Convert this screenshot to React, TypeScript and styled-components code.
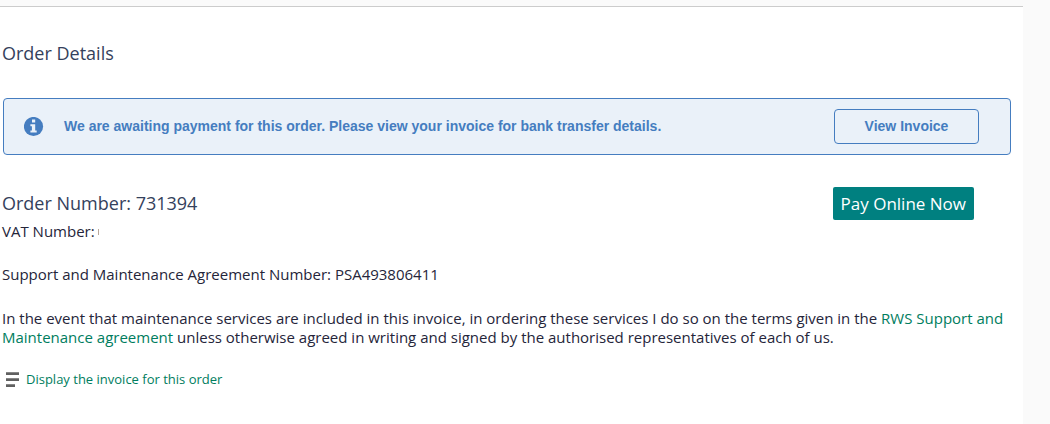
import React from "react";
import styled, { createGlobalStyle } from "styled-components";

const GlobalStyle = createGlobalStyle`
  *, *::before, *::after { box-sizing: border-box; }
  html { background: #fafafa; }
  body {
    margin: 0;
    color: #25253a;
    font-family: "Open Sans", "Noto Sans", sans-serif;
    font-size: 15px;
    line-height: 19px;
  }
  h1, h2, p { margin: 0; }
`;

const Page = styled.div`
  min-height: 100vh;
  padding: 6px 27px 0 0;
  display: flex;
`;

const Sheet = styled.main`
  flex: 1;
  min-width: 0;
  border-top: 1px solid #cccccc;
  background: #ffffff;
  padding: 32px 4px 32px 2px;
`;

const Heading = styled.h1`
  color: #34415c;
  font-size: 18px;
  font-weight: 400;
  line-height: 28px;
`;

const Notice = styled.section`
  display: flex;
  align-items: center;
  gap: 20px;
  margin: 31px 8px 0 1px;
  padding: 10px 31px 10px 20px;
  border: 1px solid #457dc0;
  border-radius: 4px;
  background: #eaf1f9;
  color: #457dc0;
  font: bold 14px/20px "Liberation Sans", Arial, sans-serif;
`;

const NoticeText = styled.p`
  flex: 1;
  padding-bottom: 2px;
`;

const OutlineButton = styled.button`
  width: 145px;
  height: 35px;
  padding: 0 0 2px;
  border: 1px solid #457dc0;
  border-radius: 4px;
  background: transparent;
  color: inherit;
  font: inherit;
  cursor: pointer;
`;

const OrderRow = styled.div`
  display: flex;
  align-items: flex-start;
  justify-content: space-between;
  margin-top: 32px;
  padding-right: 45px;
`;

const OrderHeading = styled(Heading).attrs({ as: "h2" })`
  padding-top: 2px;
`;

const PayButton = styled.button`
  height: 33px;
  padding: 0 8px;
  border: 0;
  border-radius: 2px;
  background: #008080;
  color: #ffffff;
  font: inherit;
  font-size: 17px;
  cursor: pointer;
`;

const Line = styled.p<{ $gap: number }>`
  margin-top: ${({ $gap }) => $gap}px;
`;

const Redaction = styled.span`
  display: inline-block;
  width: 1px;
  height: 6px;
  margin-left: 3px;
  vertical-align: 2px;
  background: #b9a79a;
`;

const Link = styled.a`
  color: #007d5e;
  text-decoration: none;
`;

const InvoiceLink = styled(Link)`
  display: inline-flex;
  align-items: center;
  gap: 7px;
  margin: 23px 0 0 4px;
  font-size: 13px;
`;

const InfoIcon = () => (
  <svg width="20" height="20" viewBox="0 0 20 20" aria-hidden="true">
    <circle cx="9.5" cy="9.5" r="9.6" fill="#457dc0" />
    <path d="M8 2.6h3.2v2.9H8zM6.4 7.2h4.8v6.2h1.5v2.1H6.4v-2.1h1.5V9.3H6.4z" fill="#eaf1f9" />
  </svg>
);

const LinesIcon = () => (
  <svg width="13" height="15" viewBox="0 0 13 15" aria-hidden="true" fill="#606060">
    <path d="M0 0.3h13v2.7H0zM0 6.2h13v2.7H0zM0 12.2h9v2.7H0z" />
  </svg>
);

export default function App() {
  return (
    <>
      <GlobalStyle />
      <Page>
        <Sheet>
          <Heading>Order Details</Heading>
          <Notice>
            <InfoIcon />
            <NoticeText>
              We are awaiting payment for this order. Please view your invoice for bank transfer details.
            </NoticeText>
            <OutlineButton type="button">View Invoice</OutlineButton>
          </Notice>
          <OrderRow>
            <div>
              <OrderHeading>Order Number: 731394</OrderHeading>
              <Line $gap={5}>
                VAT Number:
                <Redaction />
              </Line>
            </div>
            <PayButton type="button">Pay Online Now</PayButton>
          </OrderRow>
          <Line $gap={24}>Support and Maintenance Agreement Number: PSA493806411</Line>
          <Line $gap={25}>
            In the event that maintenance services are included in this invoice, in ordering these services I do so on
            the terms given in the <Link href="#agreement">RWS Support and Maintenance agreement</Link> unless otherwise
            agreed in writing and signed by the authorised representatives of each of us.
          </Line>
          <InvoiceLink href="#invoice">
            <LinesIcon />
            Display the invoice for this order
          </InvoiceLink>
        </Sheet>
      </Page>
    </>
  );
}
